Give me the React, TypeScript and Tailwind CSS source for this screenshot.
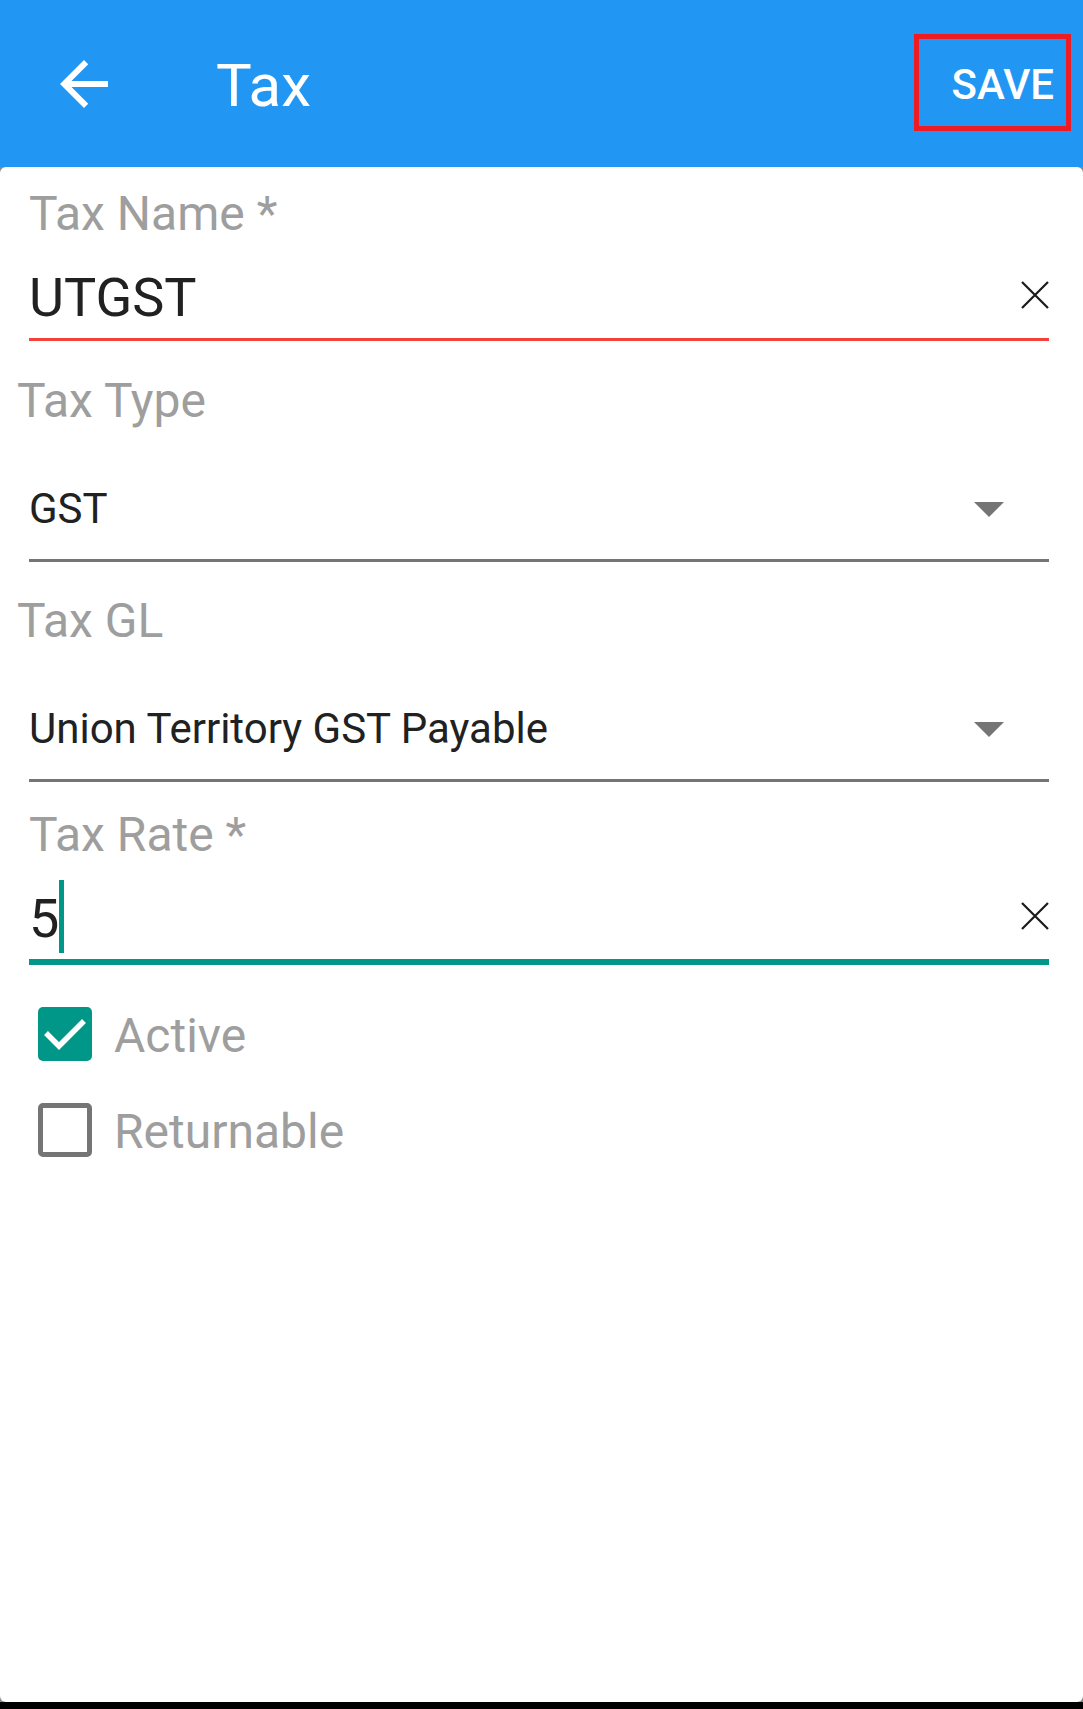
function ArrowBack() {
  return (
    <svg width="72" height="72" viewBox="0 0 24 24" fill="#ffffff">
      <path d="M20 11H7.83l5.59-5.59L12 4l-8 8 8 8 1.41-1.41L7.83 13H20v-2z" />
    </svg>
  );
}

function ClearIcon() {
  return (
    <svg width="28" height="28" viewBox="0 0 28 28" className="mb-[6px] shrink-0">
      <path d="M1 1L27 27M27 1L1 27" stroke="#1a1a1a" strokeWidth="2.2" />
    </svg>
  );
}

function Caret() {
  return (
    <svg width="30" height="15" viewBox="0 0 30 15" className="mr-[45px] shrink-0">
      <path d="M0 0H30L15 15Z" fill="#757575" />
    </svg>
  );
}

function FloatLabel({ text, className = '' }: { text: string; className?: string }) {
  return <div className={`text-[48px] leading-[48px] text-[#9e9e9e] ${className}`}>{text}</div>;
}

function SpinnerField({ label, value, labelTop, valueTop }: { label: string; value: string; labelTop: string; valueTop: string }) {
  return (
    <div>
      <FloatLabel text={label} className={`-ml-[12px] ${labelTop}`} />
      <div className={`flex items-center justify-between h-[42px] ${valueTop}`}>
        <span className="text-[42px] leading-[42px] text-[#212121]">{value}</span>
        <Caret />
      </div>
      <div className="mt-[29px] h-[3px] bg-[#757575]" />
    </div>
  );
}

function Checkbox({ checked, label, className = '' }: { checked: boolean; label: string; className?: string }) {
  return (
    <div className={`flex items-center ml-[9px] ${className}`}>
      {checked ? (
        <div className="w-[54px] h-[54px] rounded-[5px] bg-[#009688]">
          <svg width="54" height="54" viewBox="0 0 54 54">
            <polyline points="8,26 21,39 46,14" fill="none" stroke="#ffffff" strokeWidth="5.5" />
          </svg>
        </div>
      ) : (
        <div className="w-[54px] h-[54px] rounded-[5px] border-[5px] border-[#757575] bg-white" />
      )}
      <span className="ml-[22px] mt-[3px] text-[48px] leading-[48px] text-[#9e9e9e]">{label}</span>
    </div>
  );
}

export default function App() {
  return (
    <div className="w-[1083px] h-[1709px] flex flex-col font-['Roboto','Noto_Sans',sans-serif] bg-black">
      <header className="h-[167px] shrink-0 bg-[#2196f3] flex items-center">
        <button className="ml-[48px]">
          <ArrowBack />
        </button>
        <h1 className="ml-[96px] mt-[4px] text-[60px] leading-[60px] font-normal text-white">Tax</h1>
        <button className="ml-auto mr-[12px] mt-[-2px] w-[157px] h-[97px] border-[5px] border-[#ed1c24] flex items-center justify-end pr-[12px]">
          <span className="mt-[4px] text-[42px] leading-[42px] font-medium text-white">SAVE</span>
        </button>
      </header>

      <div className="h-[1535px] shrink-0 bg-[#8a8a8a]">
        <main className="h-full bg-white rounded-[6px] pt-[23px]">
          <div className="ml-[29px] w-[1020px]">
            {/* Tax Name */}
            <FloatLabel text="Tax Name *" />
            <div className="mt-[33px] flex items-center justify-between h-[54px]">
              <span className="text-[54px] leading-[54px] text-[#212121]">UTGST</span>
              <ClearIcon />
            </div>
            <div className="mt-[13px] h-[3px] bg-[#f44336]" />

            <SpinnerField label="Tax Type" value="GST" labelTop="mt-[36px]" valueTop="mt-[63px]" />
            <SpinnerField label="Tax GL" value="Union Territory GST Payable" labelTop="mt-[35px]" valueTop="mt-[63px]" />

            {/* Tax Rate */}
            <FloatLabel text="Tax Rate *" className="mt-[29px]" />
            <div className="mt-[33px] flex items-center justify-between h-[54px]">
              <div className="flex items-center h-[54px]">
                <span className="text-[54px] leading-[54px] text-[#212121]">5</span>
                <span className="w-[5px] h-[73px] bg-[#009688] mb-[5px] shrink-0" />
              </div>
              <ClearIcon />
            </div>
            <div className="mt-[13px] h-[6px] bg-[#009688]" />

            <Checkbox checked label="Active" className="mt-[42px]" />
            <Checkbox checked={false} label="Returnable" className="mt-[42px]" />
          </div>
        </main>
      </div>

      <div className="h-[7px] shrink-0 bg-black" />
    </div>
  );
}
